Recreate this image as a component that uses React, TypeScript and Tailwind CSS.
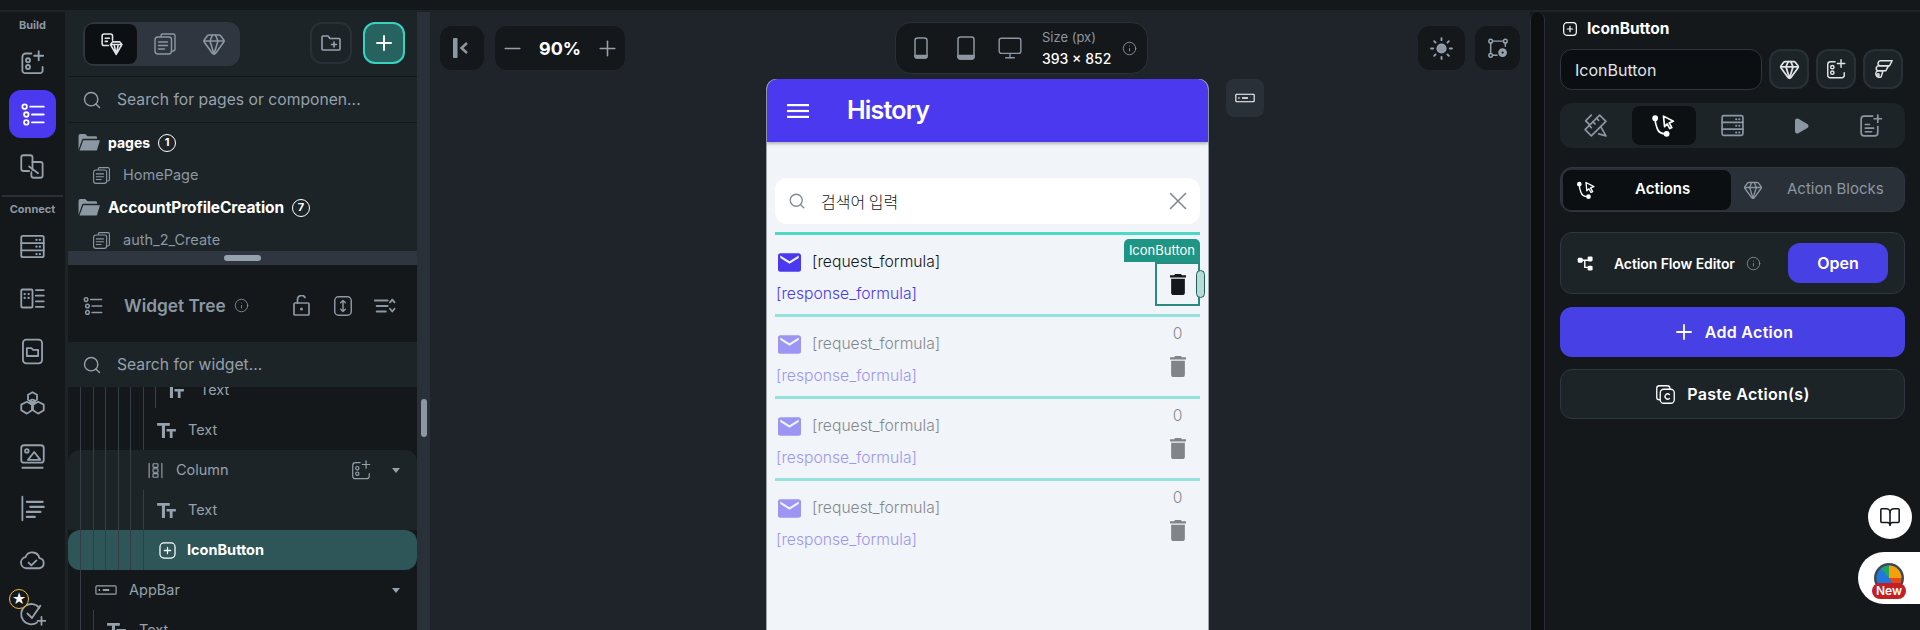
import React from "react";
import {
  BookOpen,
  Gem,
  Info,
  Minus,
  Monitor,
  Play,
  Plus,
  Search,
  Sun,
  X,
} from "lucide-react";

type IconProps = { className?: string; sw?: number; children?: React.ReactNode };

const Svg = ({ className, sw = 1.6, children }: IconProps) => (
  <svg
    viewBox="0 0 24 24"
    fill="none"
    stroke="currentColor"
    strokeWidth={sw}
    strokeLinecap="round"
    strokeLinejoin="round"
    className={className}
  >
    {children}
  </svg>
);

const AddWidgetIcon = (p: IconProps) => (
  <Svg {...p}>
    <path d="M11 4H6a3 3 0 0 0-3 3v12a2.5 2.5 0 0 0 2.500 2.500h13A2.500 2.500 0 0 0 21 19v-3" />
    <circle cx="8" cy="10" r="1.800" />
    <circle cx="8" cy="16" r="1.800" />
    <path d="M17.500 2v8M13.500 6h8" />
  </Svg>
);

const TreeListIcon = (p: IconProps) => (
  <Svg {...p}>
    <circle cx="5" cy="5" r="2" />
    <circle cx="6.500" cy="12" r="2" />
    <circle cx="6.500" cy="19" r="2" />
    <path d="M10 5h12M11.500 12H22M11.500 19H22" />
  </Svg>
);

const MappingIcon = (p: IconProps) => (
  <Svg {...p}>
    <path d="M12 15V4a2 2 0 0 0-2-2H4a2 2 0 0 0-2 2v10a2 2 0 0 0 2 2h5" />
    <path d="M12 8h7a2 2 0 0 1 2 2v10a2 2 0 0 1-2 2h-6a2 2 0 0 1-2-2v-3" />
    <path d="M9 12l8 6" />
  </Svg>
);

const ServerIcon = (p: IconProps) => (
  <Svg {...p}>
    <rect x="2" y="2.500" width="20" height="19" rx="1.500" />
    <path d="M2 9h20M2 15.500h20" />
    <path d="M15.500 6h.1M18.500 6h.1M15.500 12.200h.1M18.500 12.200h.1M15.500 18.700h.1M18.500 18.700h.1" strokeWidth={2} />
  </Svg>
);

const StoryboardIcon = (p: IconProps) => (
  <Svg {...p}>
    <rect x="2" y="4" width="10" height="16" rx="1" />
    <path d="M15 4.500h7M15 9.500h7M15 14.500h7M15 19.500h7" />
    <path d="M5 8h.1M8.500 8h.1M5 11.500h.1M8.500 11.500h.1" strokeWidth={2} />
  </Svg>
);

const FolderPhoneIcon = (p: IconProps) => (
  <Svg {...p}>
    <rect x="3.500" y="1.500" width="17" height="21" rx="3" />
    <path d="M7 9h4l1.500 1.500H17v5.500H7z" />
  </Svg>
);

const HexIcon = (p: IconProps) => (
  <Svg {...p}>
    <path d="M12 2l4 2.300v4.400L12 11 8 8.700V4.300z" />
    <path d="M7 10.500l4.500 2.500v5L7 21l-5-3v-5z" />
    <path d="M17 10.500l5 2.500v5l-5 3-4.500-3v-5z" />
    <circle cx="12" cy="10.500" r="2" />
  </Svg>
);

const ImageIcon = (p: IconProps) => (
  <Svg {...p}>
    <rect x="2" y="2" width="20" height="15.500" rx="2.500" />
    <circle cx="7" cy="7" r="1.600" />
    <path d="M8 15l5.500-7 5.500 7zM3 22h18" />
  </Svg>
);

const AlignIcon = (p: IconProps) => (
  <Svg {...p}>
    <path d="M3 1.500v21" />
    <path d="M7 6h14M10 10.500h12M7 15h12M7 19.500h7" strokeWidth={2} />
  </Svg>
);

const CloudIcon = (p: IconProps) => (
  <Svg {...p}>
    <path d="M6.500 18a5 5 0 0 1-.7-9.900 6.500 6.500 0 0 1 12.400 1A4.500 4.500 0 0 1 18 18z" />
    <path d="M8.500 13l2.500 2.500L15.500 11" />
  </Svg>
);

const CheckPlusIcon = (p: IconProps) => (
  <Svg {...p}>
    <path d="M18 7a9 9 0 1 0-2 13" />
    <path d="M7.500 12l4 4L19 5" />
    <path d="M20 15v7M16.500 18.500h7" />
  </Svg>
);

const FolderOpenFill = ({ className }: IconProps) => (
  <svg viewBox="0 0 24 20" className={className} fill="currentColor">
    <path d="M1 3a2 2 0 0 1 2-2h5l2.500 2.500H19a1.500 1.500 0 0 1 1.500 1.500v1H6.500a2 2 0 0 0-1.900 1.400L1 17.500z" />
    <path d="M6 7.500h17.500l-3 10a1.500 1.500 0 0 1-1.400 1H2z" />
  </svg>
);

const PagesIcon = (p: IconProps) => (
  <Svg {...p} sw={1.400}>
    <path d="M8 4.500V3.500A1.500 1.500 0 0 1 9.500 2H20a2 2 0 0 1 2 2v13a2 2 0 0 1-2 2h-1" />
    <path d="M5 5h11a2.500 2.500 0 0 1 2.500 2.500V19a3 3 0 0 1-3 3H5a3 3 0 0 1-3-3V8a3 3 0 0 1 3-3z" />
    <path d="M5.500 10h9M5.500 13.500h9M5.500 17h6" />
  </Svg>
);

const PageGemIcon = ({ className }: IconProps) => (
  <Svg className={className} sw={1.500}>
    <path d="M9 13H5a2 2 0 0 1-2-2V4a2 2 0 0 1 2-2h6a2 2 0 0 1 2 2v4" />
    <path d="M6 6h4M6 9h2" />
    <path d="M11 12l2-2.500h7l2 2.500-5.500 9.500zM11 12h11M14.500 12l2 9.500 2-9.500" />
  </Svg>
);

const FolderPlusIcon = (p: IconProps) => (
  <Svg {...p}>
    <path d="M3 6a1 1 0 0 1 1-1h5l2 2.500h9a1 1 0 0 1 1 1V18a1 1 0 0 1-1 1H4a1 1 0 0 1-1-1z" />
    <path d="M15 11v5M12.500 13.500h5" />
  </Svg>
);

const SortIcon = (p: IconProps) => (
  <Svg {...p} sw={2}>
    <path d="M2 6h14M4 12h12M4 18h10" />
    <path d="M18.500 8l2.500-3 2.500 3M18.500 15l2.500 3 2.500-3" />
  </Svg>
);

const ExpandIcon = (p: IconProps) => (
  <Svg {...p}>
    <rect x="3" y="2" width="18" height="20" rx="4" />
    <path d="M12 6v12M9.500 8.500L12 6l2.500 2.500M9.500 15.500L12 18l2.500-2.500" />
  </Svg>
);

const LockDotIcon = ({ className }: IconProps) => (
  <svg viewBox="0 0 17 21" className={className} fill="none" stroke="currentColor" strokeWidth="1.700">
    <rect x="1" y="8" width="15" height="12" rx="1" />
    <path d="M4.500 8V4.500a4 4 0 0 1 7.500-2" strokeLinecap="round" />
    <circle cx="8.500" cy="14" r="1.500" fill="currentColor" stroke="none" />
  </svg>
);

const TextTIcon = ({ className }: IconProps) => (
  <svg viewBox="0 0 20 16" className={className} fill="currentColor">
    <path d="M0 0h13.500v3H8.400v13H5.100V3H0z" />
    <path d="M10 6.500h10v2.500h-3.500v7h-3V9H10z" />
  </svg>
);

const ColumnIcon = (p: IconProps) => (
  <Svg {...p}>
    <path d="M3 2v20M21 2v20" />
    <rect x="8.500" y="2.500" width="7" height="5" rx="1" />
    <rect x="8.500" y="9.500" width="7" height="5" rx="1" />
    <rect x="8.500" y="16.500" width="7" height="5" rx="1" />
  </Svg>
);

const IconButtonIcon = (p: IconProps) => (
  <Svg {...p}>
    <rect x="2.500" y="2.500" width="19" height="19" rx="5" />
    <path d="M12 8v8M8 12h8" />
  </Svg>
);

const AppBarIcon = ({ className }: IconProps) => (
  <svg viewBox="0 0 24 12" className={className} fill="none" stroke="currentColor" strokeWidth="1.300">
    <rect x="1" y="1.500" width="22" height="9" rx="1" />
    <path d="M4 6h1.500M8.500 6h7" strokeWidth="2" />
  </svg>
);

const FlowCursorIcon = (p: IconProps) => (
  <Svg {...p} sw={1.600}>
    <circle cx="4" cy="5" r="2" fill="currentColor" />
    <circle cx="15" cy="20" r="2" fill="currentColor" />
    <path d="M4 6c0 4 1 6 2 9s3 5 8 5" />
    <path d="M12 3l9.500 5-4 1.500 2.500 4.500-2 1-2.500-4.500L13 13z" />
  </Svg>
);

const RulerPenIcon = (p: IconProps) => (
  <Svg {...p}>
    <path d="M16 2l6 6L8 22l-6-6z" />
    <path d="M6 12l2 2M9.500 8.500l2 2M13 5l2 2" />
    <path d="M8 2L2.500 7.500 6 11M17 13l5 9-7-2" />
  </Svg>
);

const NoteAddIcon = (p: IconProps) => (
  <Svg {...p}>
    <path d="M14 3H6a3 3 0 0 0-3 3v13a3 3 0 0 0 3 3h10a3 3 0 0 0 3-3v-6" />
    <path d="M7 11h4M7 14.500h8M7 18h6" />
    <path d="M19 2v7M15.500 5.500h7" />
  </Svg>
);

const GraphGearIcon = (p: IconProps) => (
  <Svg {...p}>
    <rect x="2" y="2.500" width="4" height="4" rx="2" />
    <rect x="18" y="2.500" width="4" height="4" rx="2" />
    <rect x="2" y="18" width="4" height="4" rx="2" />
    <path d="M6 4.500h12M4 6.500V18M20 6.500V10M6 20h5" />
    <circle cx="17" cy="17" r="4" fill="currentColor" />
    <circle cx="17" cy="17" r="1.200" fill="#14181b" stroke="none" />
  </Svg>
);

const FlutterIcon = (p: IconProps) => (
  <Svg {...p}>
    <path d="M10 3h12l-3 5.500H8a3 3 0 0 1 2-5.500z" />
    <path d="M8 8.500h10L15 14H6a3 3 0 0 1 2-5.500z" />
    <path d="M6 14h6l-2 6.500a3.500 3.500 0 1 1-4-6.500z" />
    <circle cx="6.500" cy="18.500" r="1.300" />
  </Svg>
);

const FlowNodesIcon = ({ className }: IconProps) => (
  <svg viewBox="0 0 24 24" className={className} fill="currentColor">
    <rect x="1" y="4" width="7" height="7" rx="2" />
    <rect x="15" y="2" width="7" height="7" rx="2" />
    <rect x="15" y="15" width="7" height="7" rx="2" />
    <path d="M7 6.500h9v2h-4v8h4v2h-6V8.500H7z" />
  </svg>
);

const PasteIcon = (p: IconProps) => (
  <Svg {...p} sw={1.500}>
    <path d="M5 18a3 3 0 0 1-3-3V5a3 3 0 0 1 3-3h9a3 3 0 0 1 3 3" />
    <rect x="6" y="6" width="16" height="16" rx="4" />
    <path d="M16.500 12a3 3 0 1 0 0 4.500" />
  </Svg>
);

const TrashFill = ({ className }: IconProps) => (
  <svg viewBox="5 3 14 18" preserveAspectRatio="none" className={className} fill="currentColor">
    <path d="M6 19c0 1.100.9 2 2 2h8c1.100 0 2-.9 2-2V7H6v12zM19 4h-3.500l-1-1h-5l-1 1H5v2h14V4z" />
  </svg>
);

const MailFill = ({ className }: IconProps) => (
  <svg viewBox="2 4 20 16" className={className} fill="currentColor">
    <path d="M20 4H4c-1.100 0-1.990.9-1.990 2L2 18c0 1.100.9 2 2 2h16c1.100 0 2-.9 2-2V6c0-1.100-.9-2-2-2zm0 4l-8 5-8-5V6l8 5 8-5v2z" />
  </svg>
);

const MenuLines = ({ className }: IconProps) => (
  <svg viewBox="0 0 22 14" className={className} fill="currentColor">
    <rect width="22" height="2.200" />
    <rect y="5.900" width="22" height="2.200" />
    <rect y="11.800" width="22" height="2.200" />
  </svg>
);

const Caret = () => (
  <svg viewBox="0 0 8 5" className="h-[5px] w-[8px] text-[#95a1ac]" fill="currentColor">
    <path d="M0 0h8L4 5z" />
  </svg>
);

const railTop = [AddWidgetIcon, TreeListIcon, MappingIcon];
const railBottom = [ServerIcon, StoryboardIcon, FolderPhoneIcon, HexIcon, ImageIcon, AlignIcon, CloudIcon, CheckPlusIcon];

const Rail = () => (
  <div className="flex w-[68px] shrink-0 flex-col items-center border-r-[3px] border-[#1d2428] text-[#95a1ac]">
    <div className="flex h-[24px] shrink-0 items-center pt-[2px] text-[11px] font-bold text-[#8b97a2]">Build</div>
    {railTop.map((Icon, i) => (
      <div key={i} className="flex h-[52px] w-full shrink-0 items-center justify-center">
        <div className={`flex h-[48px] w-[47px] items-center justify-center rounded-xl ${i === 1 ? "bg-[#4b39ef] text-white" : ""}`}>
          <Icon className="h-[27px] w-[27px]" />
        </div>
      </div>
    ))}
    <div className="mt-[3px] h-[2px] w-[61px] shrink-0 bg-[#2a3038]" />
    <div className="flex h-[23px] shrink-0 items-center pt-[2px] text-[11px] font-bold text-[#8b97a2]">Connect</div>
    {railBottom.map((Icon, i) => (
      <div key={i} className="relative flex h-[52.500px] w-full shrink-0 items-center justify-center">
        <Icon className="h-[27px] w-[27px]" />
        {i === 7 && (
          <div className="absolute left-[9px] top-[1px] flex h-[20px] w-[20px] items-center justify-center rounded-full border-[1.500px] border-[#eebb34] bg-[#14181b] text-[14px] leading-none text-white">
            ★
          </div>
        )}
      </div>
    ))}
  </div>
);

const PagesPanel = () => (
  <div className="h-[239px] shrink-0 overflow-hidden bg-[#1d2428]">
    <div className="flex h-[65px] items-start border-b border-[#14181b] pl-[15px] pt-[10px]">
      <div className="flex h-[44px] w-[157px] items-center rounded-xl bg-[#2f3640] pl-[2px]">
        <div className="flex h-[40px] w-[52px] items-center justify-center rounded-lg bg-[#0c1013] text-[#e0e3e7]">
          <PageGemIcon className="h-[25px] w-[25px]" />
        </div>
        <PagesIcon className="ml-[16px] h-[24px] w-[24px] text-[#8b97a2]" />
        <Gem className="ml-[25px] h-[24px] w-[24px] text-[#8b97a2]" strokeWidth={1.600} />
      </div>
      <div className="ml-[70px] flex h-[42px] w-[42px] items-center justify-center rounded-xl border-2 border-[#2a3038] text-[#95a1ac]">
        <FolderPlusIcon className="h-[24px] w-[24px]" />
      </div>
      <div className="ml-[11px] flex h-[42px] w-[42px] items-center justify-center rounded-xl border-2 border-[#39d2c0] bg-[#27635e] text-white">
        <Plus className="h-[24px] w-[24px]" strokeWidth={2} />
      </div>
    </div>
    <div className="flex h-[46px] items-center gap-[15px] border-b border-[#14181b] pl-[14px] text-[#95a1ac]">
      <Search className="h-[20px] w-[20px]" strokeWidth={1.700} />
      <span className="text-[15.700px]">Search for pages or componen...</span>
    </div>
    <div className="flex h-[39px] items-center pl-[9px]">
      <FolderOpenFill className="h-[19px] w-[24px] text-[#8b97a2]" />
      <span className="ml-[7px] text-[14px] font-bold text-white">pages</span>
      <span className="ml-[8px] flex h-[18px] w-[18px] items-center justify-center rounded-full border border-white text-[11px] font-bold text-white">1</span>
    </div>
    <div className="flex h-[26px] items-center pl-[24px] text-[#8b97a2]">
      <PagesIcon className="h-[19px] w-[19px]" />
      <span className="ml-[12px] text-[14.500px]">HomePage</span>
    </div>
    <div className="flex h-[39px] items-center pl-[9px]">
      <FolderOpenFill className="h-[19px] w-[24px] text-[#8b97a2]" />
      <span className="ml-[7px] text-[15.500px] font-bold tracking-[-0.1px] text-white">AccountProfileCreation</span>
      <span className="ml-[8px] flex h-[18px] w-[18px] items-center justify-center rounded-full border border-white text-[11px] font-bold text-white">7</span>
    </div>
    <div className="flex h-[26px] items-center pl-[24px] text-[#8b97a2]">
      <PagesIcon className="h-[19px] w-[19px]" />
      <span className="ml-[12px] text-[14.500px]">auth_2_Create</span>
    </div>
  </div>
);

const Guides = ({ lines }: { lines: string[] }) => (
  <>
    {lines.map((c) => (
      <span key={c} className={`absolute inset-y-0 w-px bg-[#353d47] ${c}`} />
    ))}
  </>
);

const g1 = "left-[12px]";
const g2 = "left-[25px]";
const g3 = "left-[37px]";
const g4 = "left-[50px]";
const g5 = "left-[62px]";
const g6 = "left-[75px]";
const allGuides = [g1, g2, g3, g4, g5, g6];

const WidgetTree = () => (
  <div className="min-h-0 flex-1 overflow-hidden bg-[#14181b] text-[14.500px] text-[#95a1ac]">
    <div className="-mt-[17px]">
      <div className="relative flex h-10 items-center pl-[97px]">
        <Guides lines={allGuides} />
        <span className="absolute bottom-[2px] left-[87px] top-0 w-px bg-[#39424c]" />
        <TextTIcon className="h-[15px] w-[19px]" />
        <span className="ml-[16px]">Text</span>
      </div>
      <div className="relative flex h-10 items-center pl-[89px]">
        <Guides lines={allGuides} />
        <TextTIcon className="h-[15px] w-[19px]" />
        <span className="ml-[12px]">Text</span>
      </div>
      <div className="relative flex h-10 items-center rounded-t-xl bg-[#1d2428] pl-[79px]">
        <Guides lines={[g1, g2, g3, g4, g5]} />
        <ColumnIcon className="h-[21px] w-[17px]" />
        <span className="ml-[12px]">Column</span>
        <AddWidgetIcon className="ml-auto h-[22px] w-[22px]" sw={1.300} />
        <span className="ml-[20px] mr-[17px]">
          <Caret />
        </span>
      </div>
      <div className="relative flex h-10 items-center bg-[#1d2428] pl-[89px]">
        <Guides lines={allGuides} />
        <TextTIcon className="h-[15px] w-[19px]" />
        <span className="ml-[12px]">Text</span>
      </div>
      <div className="relative flex h-10 items-center overflow-hidden rounded-xl bg-[#2e5558] pl-[90px] font-bold text-white">
        <Guides lines={allGuides} />
        <IconButtonIcon className="h-[19px] w-[19px]" />
        <span className="ml-[10px]">IconButton</span>
      </div>
      <div className="relative flex h-10 items-center pl-[27px]">
        <Guides lines={[g1]} />
        <AppBarIcon className="h-[12px] w-[22px]" />
        <span className="ml-[12px]">AppBar</span>
        <span className="ml-auto mr-[17px]">
          <Caret />
        </span>
      </div>
      <div className="relative flex h-10 items-center pl-[39px]">
        <Guides lines={[g1, g2]} />
        <TextTIcon className="h-[15px] w-[19px]" />
        <span className="ml-[13px]">Text</span>
      </div>
    </div>
  </div>
);

const LeftPanel = () => (
  <div className="flex w-[349px] shrink-0 flex-col">
    <PagesPanel />
    <div className="flex h-[14px] shrink-0 items-center justify-center bg-[#2f3640]">
      <div className="h-[6px] w-[37px] rounded-full bg-[#95a1ac]" />
    </div>
    <div className="flex h-[77px] shrink-0 items-center bg-[#14181b] pl-[13px] pt-[4px] text-[#8b97a2]">
      <TreeListIcon className="h-[22px] w-[23px]" />
      <span className="ml-[20px] w-[96px] whitespace-nowrap text-[17.300px] font-semibold">Widget Tree</span>
      <Info className="ml-[14px] h-[15px] w-[15px]" strokeWidth={1.300} />
      <LockDotIcon className="ml-[44px] h-[21px] w-[17px]" />
      <ExpandIcon className="ml-[22px] h-[22px] w-[22px]" />
      <SortIcon className="ml-[17px] h-[22px] w-[26px]" />
    </div>
    <div className="flex h-[45px] shrink-0 items-center gap-[15px] bg-[#1d2428] pl-[14px] text-[#95a1ac]">
      <Search className="h-[20px] w-[20px]" strokeWidth={1.700} />
      <span className="text-[15.700px]">Search for widget...</span>
    </div>
    <WidgetTree />
  </div>
);

const ScrollStrip = () => (
  <div className="relative w-[13px] shrink-0 bg-[#2a3038]">
    <div className="absolute left-[4px] top-[387px] h-[38px] w-[6px] rounded-full bg-[#8b97a2]" />
  </div>
);

const rows = [0, 1, 2];

const RowText = () => (
  <div>
    <div className="flex h-[20px] items-center pl-[3px]">
      <MailFill className="h-[19px] w-[23px] text-[#4b39ef]" />
      <span className="ml-[11px] text-[15.700px] font-light text-[#14181b]">[request_formula]</span>
    </div>
    <div className="mt-[12px] flex h-[20px] items-center pl-[1px] text-[15.700px] font-light text-[#4b39ef]">[response_formula]</div>
  </div>
);

const PhonePreview = () => (
  <div className="ml-[336px] mt-[67px] flex h-[600px] w-[443px] flex-col rounded-t-[10px] border-x border-[#9aa3ab] bg-[#f1f4f8]">
    <div className="flex h-[63px] shrink-0 items-center rounded-t-[10px] bg-[#4b39ef] pl-[20px] text-white shadow-[0_2px_3px_rgba(0,0,0,0.25)]">
      <MenuLines className="h-[14px] w-[22px]" />
      <span className="ml-[38px] text-[25px] font-semibold tracking-[-0.8px]">History</span>
    </div>
    <div className="px-[8px] pt-[36px]">
      <div className="flex h-[46px] items-center rounded-xl bg-white pl-[13px] pr-[7px] text-[#808890]">
        <Search className="h-[18px] w-[18px]" strokeWidth={1.700} />
        <span className="ml-[15px] font-['Noto_Sans_CJK_KR',sans-serif] text-[16px] font-light text-[#14181b]">검색어 입력</span>
        <X className="ml-auto h-[30px] w-[30px]" strokeWidth={1.300} />
      </div>
      <div className="mt-[8px] h-[3px] bg-[#4ed8c6]" />
      <div className="relative h-[79px] pt-[17px]">
        <RowText />
        <div className="absolute bottom-[8px] right-0 flex h-[44px] w-[45px] items-center justify-center border-2 border-[#2a8a80]">
          <TrashFill className="h-[21px] w-[16px] text-[#14181b]" />
        </div>
        <div className="absolute right-0 top-[4px] flex h-[23px] items-center rounded-t-[5px] bg-[#1f9585] px-[5px] text-[13px] text-white">IconButton</div>
        <div className="absolute right-[-5px] top-[35px] h-[28px] w-[9px] rounded-full border-[1.500px] border-[#235e58] bg-[#b7dcd6]" />
      </div>
      {rows.map((r) => (
        <div key={r} className="opacity-50">
          <div className="h-[3px] bg-[#39d2c0]" />
          <div className="relative h-[79px] pt-[17px]">
            <RowText />
            <div className="absolute right-0 top-0 flex w-[45px] flex-col items-center">
              <span className="mt-[5px] text-[15.700px] font-light leading-[24px] text-[#14181b]">0</span>
              <TrashFill className="mt-[10px] h-[21px] w-[16px] text-[#14181b]" />
            </div>
          </div>
        </div>
      ))}
    </div>
  </div>
);

const Canvas = () => (
  <div className="relative flex-1 overflow-hidden bg-[#1e2429]">
    <div className="absolute left-0 right-0 top-[14px] flex items-start pl-[10px] pr-[10px] text-[#95a1ac]">
      <div className="flex h-[44px] w-[44px] items-center justify-center rounded-xl bg-[#14181b]">
        <svg viewBox="0 0 20 20" className="h-[20px] w-[20px]">
          <rect x="1" y="0" width="4.500" height="20" rx="0.800" fill="#8b97a2" />
          <path d="M15 5l-5.500 5 5.500 5" stroke="#8b97a2" strokeWidth="2.500" fill="none" />
        </svg>
      </div>
      <div className="ml-[11px] flex h-[44px] w-[130px] items-center justify-between rounded-xl bg-[#14181b] px-[5px]">
        <Minus className="h-[25px] w-[25px]" strokeWidth={1.500} />
        <span className="text-[18px] font-bold text-white">90%</span>
        <Plus className="h-[25px] w-[25px]" strokeWidth={1.500} />
      </div>
      <div className="ml-[270px] -mt-[4px] flex h-[52px] w-[253px] items-center rounded-2xl border border-[#2a3038] bg-[#14181b] pl-[18px]">
        <svg viewBox="0 0 14 22" className="h-[22px] w-[14px]" fill="none" stroke="#8b97a2" strokeWidth="1.500">
          <rect x="1" y="1" width="12" height="20" rx="2.500" />
          <path d="M1 18.500h12v1a1.500 1.500 0 0 1-1.500 1.500h-9A1.500 1.500 0 0 1 1 19.500z" fill="#8b97a2" />
        </svg>
        <svg viewBox="0 0 18 24" className="ml-[29px] h-[24px] w-[18px]" fill="none" stroke="#8b97a2" strokeWidth="1.500">
          <rect x="1" y="1" width="16" height="22" rx="2.500" />
          <path d="M1 19.500h16v1a2.500 2.500 0 0 1-2.500 2.500h-11A2.500 2.500 0 0 1 1 20.500z" fill="#8b97a2" />
        </svg>
        <Monitor className="ml-[22px] h-[26px] w-[26px] text-[#8b97a2]" strokeWidth={1.300} />
        <div className="ml-[19px] text-[13px] leading-[21px]">
          <div className="text-[#8b97a2]">Size (px)</div>
          <div className="text-[14px] font-medium text-white">393 × 852</div>
        </div>
        <Info className="ml-[11px] h-[15px] w-[15px]" strokeWidth={1.300} />
      </div>
      <div className="ml-auto mr-[10px] flex h-[44px] w-[47px] items-center justify-center rounded-xl bg-[#14181b]">
        <Sun className="h-[25px] w-[25px] fill-[#8b97a2]" strokeWidth={1.800} />
      </div>
      <div className="flex h-[44px] w-[45px] items-center justify-center rounded-xl bg-[#14181b]">
        <GraphGearIcon className="h-[22px] w-[22px]" />
      </div>
    </div>
    <div className="absolute left-[796px] top-[67px] flex h-[38px] w-[38px] items-center justify-center rounded-lg bg-[#2a3038] text-white">
      <AppBarIcon className="h-[10px] w-[20px]" />
    </div>
    <PhonePreview />
  </div>
);

const SquareBtn = ({ children }: { children: React.ReactNode }) => (
  <div className="flex h-[40px] w-[40px] items-center justify-center rounded-xl border-2 border-[#2a3038] bg-[#1d2428] text-[#e0e3e7]">
    {children}
  </div>
);

const tabs = [RulerPenIcon, FlowCursorIcon, ServerIcon, null, NoteAddIcon];

const RightPanel = () => (
  <div className="relative flex w-[375px] shrink-0 flex-col bg-[#14181b] px-[15px]">
    <div className="flex h-[34px] shrink-0 items-center pl-[2px] text-[15.500px] font-bold text-white">
      <IconButtonIcon className="h-[16px] w-[16px]" sw={1.800} />
      <span className="ml-[9px]">IconButton</span>
    </div>
    <div className="mt-[3px] flex gap-[7px]">
      <div className="flex h-[41px] w-[202px] items-center rounded-xl border border-[#2f3640] bg-[#0b0f12] pl-[14px] text-[16px] text-[#e0e3e7]">IconButton</div>
      <SquareBtn>
        <Gem className="h-[21px] w-[21px]" strokeWidth={2} />
      </SquareBtn>
      <SquareBtn>
        <AddWidgetIcon className="h-[22px] w-[22px]" />
      </SquareBtn>
      <SquareBtn>
        <FlutterIcon className="h-[22px] w-[22px]" />
      </SquareBtn>
    </div>
    <div className="mt-[13px] flex h-[45px] items-center justify-between rounded-xl bg-[#1d2428] px-[3px] text-[#8b97a2]">
      {tabs.map((Icon, i) => (
        <div key={i} className={`flex h-[39px] w-[64px] items-center justify-center rounded-lg ${i === 1 ? "bg-[#0c1013] text-white" : ""}`}>
          {Icon ? <Icon className="h-[25px] w-[25px]" /> : <Play className="h-[18px] w-[18px] fill-[#8b97a2]" />}
        </div>
      ))}
    </div>
    <div className="mt-[19px] flex h-[45px] items-center rounded-xl border border-[#2f3640] bg-[#2a3038] pl-[2px] text-[15px]">
      <div className="flex h-[40px] w-[168px] items-center rounded-lg bg-[#0b0f12] pl-[13px] font-semibold text-white">
        <FlowCursorIcon className="h-[20px] w-[20px]" />
        <span className="ml-[39px]">Actions</span>
      </div>
      <Gem className="ml-[12px] h-[20px] w-[20px] text-[#8b97a2]" strokeWidth={1.600} />
      <span className="ml-[24px] text-[#8b97a2]">Action Blocks</span>
    </div>
    <div className="mt-[20px] flex h-[62px] items-center rounded-xl border border-[#2f3640] bg-[#1d2428] pl-[16px] pr-[16px]">
      <FlowNodesIcon className="h-[17px] w-[17px] text-white" />
      <span className="ml-[20px] text-[14px] font-semibold tracking-[-0.1px] text-white">Action Flow Editor</span>
      <Info className="ml-[11px] h-[15px] w-[15px] text-[#8b97a2]" strokeWidth={1.300} />
      <div className="ml-auto flex h-[40px] w-[100px] items-center justify-center rounded-xl bg-[#4740e5] text-[16px] font-semibold text-white">Open</div>
    </div>
    <div className="mt-[13px] flex h-[50px] items-center justify-center rounded-xl bg-[#4740e5] text-[16px] font-semibold tracking-[0.3px] text-white">
      <Plus className="h-[24px] w-[24px]" strokeWidth={1.800} />
      <span className="ml-[9px]">Add Action</span>
    </div>
    <div className="mt-[12px] flex h-[50px] items-center justify-center rounded-xl border border-[#2f3640] bg-[#1d2428] text-[16px] font-semibold tracking-[0.3px] text-white">
      <PasteIcon className="h-[21px] w-[21px]" />
      <span className="ml-[11px]">Paste Action(s)</span>
    </div>
    <div className="absolute left-[323px] top-[483px] flex h-[44px] w-[44px] items-center justify-center rounded-full bg-white text-[#14181b]">
      <BookOpen className="h-[22px] w-[22px]" strokeWidth={1.700} />
    </div>
    <div className="absolute right-0 top-[540px] flex h-[52px] w-[62px] items-center justify-center rounded-l-[26px] bg-white">
      <div className="relative h-[34px] w-[34px]">
        <svg viewBox="0 0 30 30" className="absolute left-[2px] top-[2px] h-[30px] w-[30px]">
          <circle cx="15" cy="15" r="15" fill="#40484f" />
          <circle cx="15" cy="15" r="12.500" fill="#2277dd" />
          <path d="M15 15V2.500A12.500 12.500 0 0 1 27.500 15z" fill="#f5a20a" />
          <path d="M15 15h12.500a12.500 12.500 0 0 1-5 10z" fill="#e2491b" />
          <path d="M15 15L7 5.500A12.500 12.500 0 0 1 15 2.500z" fill="#1ca765" />
        </svg>
        <div className="absolute bottom-[-4px] left-0 flex h-[16px] w-[34px] items-center justify-center rounded-full bg-[#c41f23] text-[12px] font-semibold text-white">New</div>
      </div>
    </div>
  </div>
);

export default function App() {
  return (
    <div className="flex h-[630px] w-[1920px] flex-col overflow-hidden bg-[#14181b] font-['Inter',sans-serif]">
      <div className="h-[12px] shrink-0 border-b-2 border-[#1d2428] bg-[#14181b]" />
      <div className="flex min-h-0 flex-1">
        <Rail />
        <LeftPanel />
        <ScrollStrip />
        <Canvas />
        <div className="w-[15px] shrink-0 rounded-t-lg border-x border-[#2a3038] bg-[#0d0f11]" />
        <RightPanel />
      </div>
    </div>
  );
}
